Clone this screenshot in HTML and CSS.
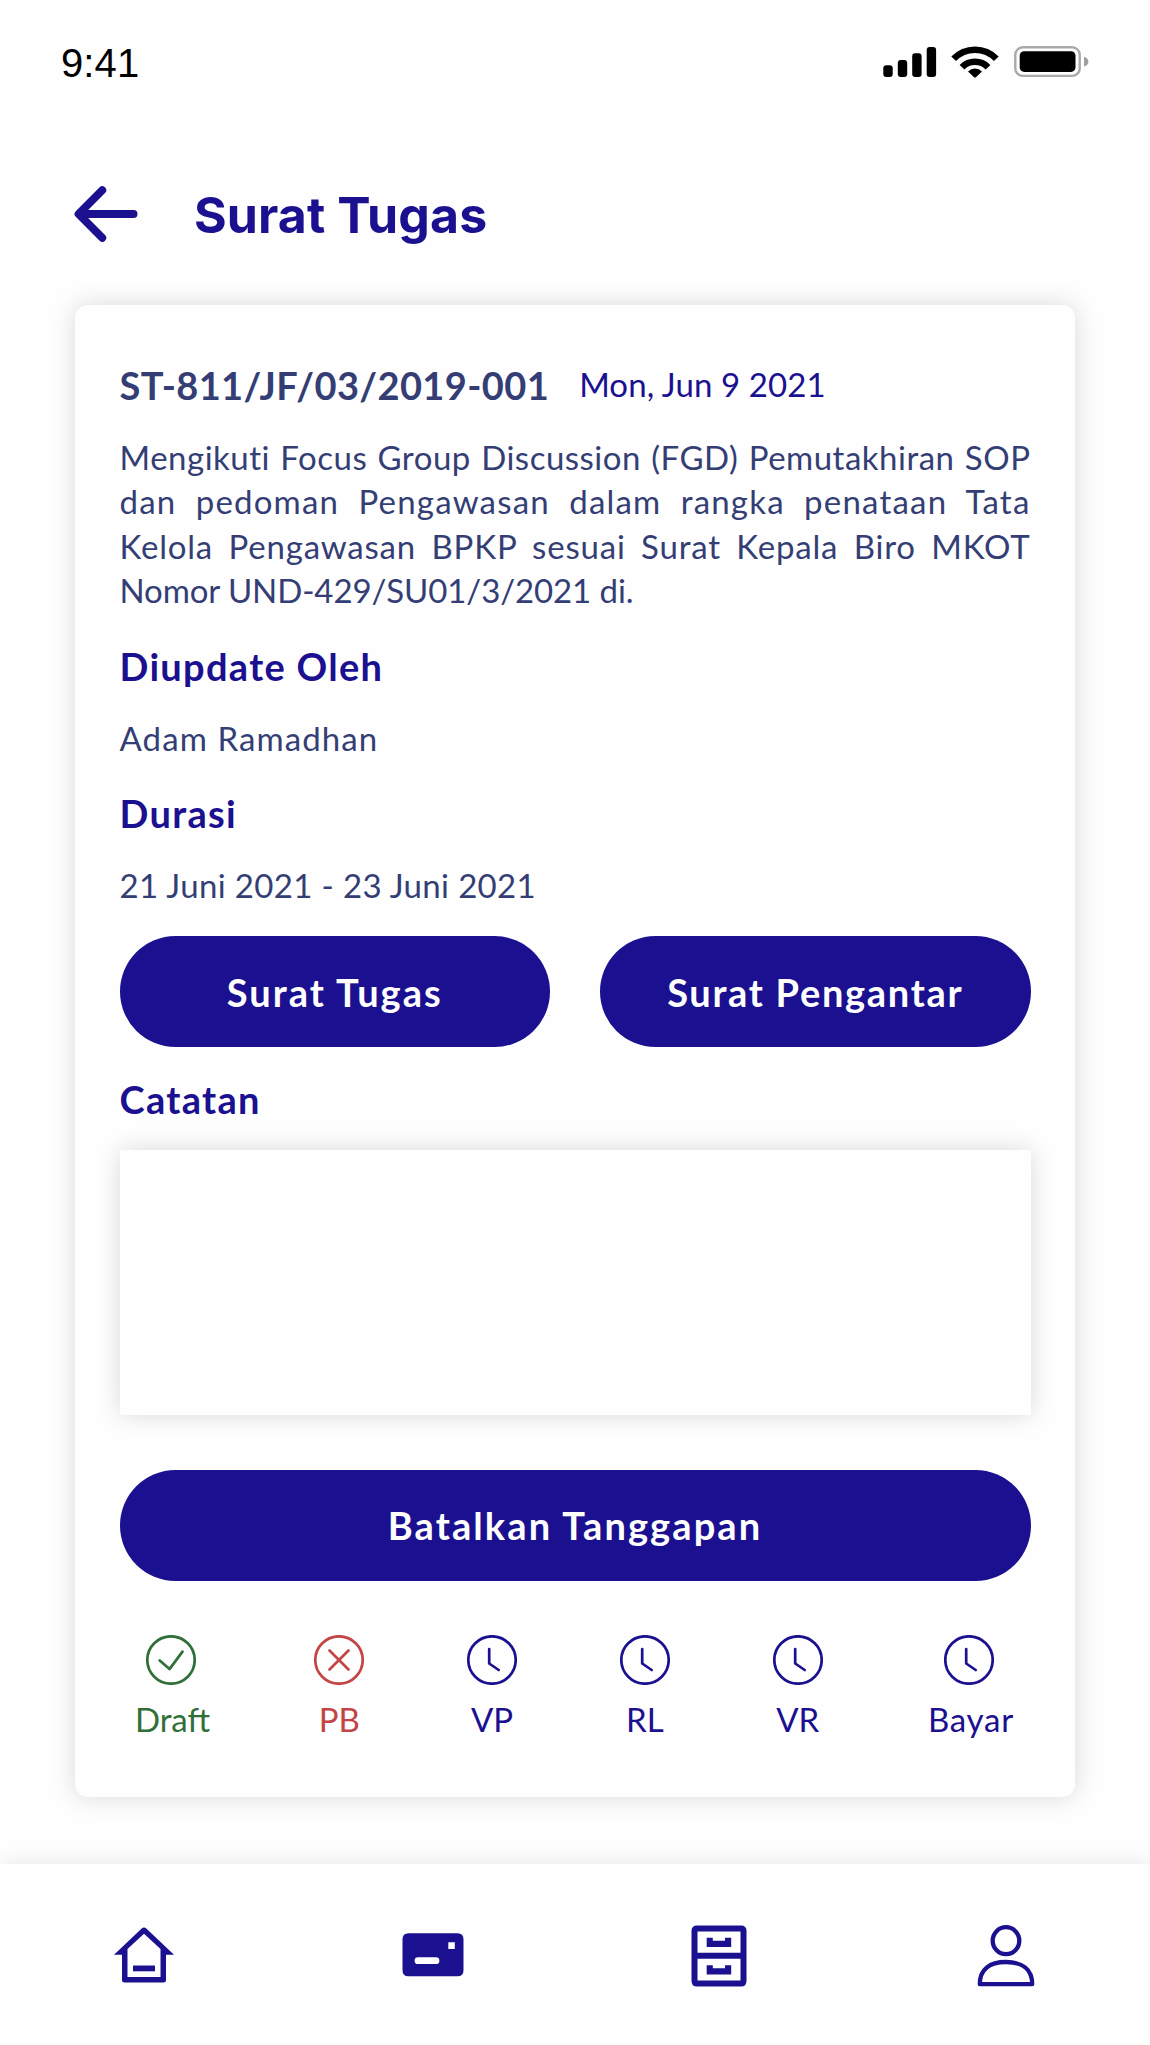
FILE: index.html
```html
<!DOCTYPE html>
<html lang="id">
<head>
<meta charset="utf-8">
<title>Surat Tugas</title>
<link rel="stylesheet" href="styles.css">
</head>
<body>
<div class="screen">
  <div class="status-bar">
    <span class="time">9:41</span>
    <svg class="status-icons" viewBox="0 0 206 32" width="206" height="32">
      <rect x="0.3" y="19.3" width="9.4" height="11.7" rx="3"/>
      <rect x="14.8" y="14" width="9.4" height="17" rx="3"/>
      <rect x="29.2" y="7.3" width="9.4" height="23.7" rx="3"/>
      <rect x="43.7" y="1" width="9.4" height="30" rx="3"/>
      <g fill="none" stroke="#000" stroke-width="6.6">
        <path d="M70.7 12.8a29.5 29.5 0 0 1 42.6 0"/>
        <path d="M79 21.2a18.3 18.3 0 0 1 26 0"/>
      </g>
      <path d="M85 25.4a10 10 0 0 1 14 0l-5.8 5.6q-1.2 1.2-2.4 0z"/>
      <rect x="132.3" y="1.3" width="64.4" height="28.6" rx="7.5" fill="none" stroke="#a9a9a9" stroke-width="2.4"/>
      <rect x="136.7" y="5.3" width="55.8" height="20.6" rx="4.5"/>
      <path d="M201 10.8q4.4 1.4 4.4 4.9t-4.4 4.900z" fill="#a0a0a0"/>
    </svg>
  </div>

  <header class="header">
    <svg class="back" viewBox="0 0 64 56" width="64" height="56"><path d="M28.2 4.2 4.600 28l23.600 23.800M5 28h54.500" fill="none" stroke="currentColor" stroke-width="8" stroke-linecap="round" stroke-linejoin="round"/></svg>
    <h1 class="title">Surat Tugas</h1>
  </header>

  <main class="card">
    <div class="letter-head">
      <h2 class="letter-no">ST-811/JF/03/2019-001</h2>
      <span class="letter-date">Mon, Jun 9 2021</span>
    </div>
    <p class="summary">
      <span class="line">Mengikuti Focus Group Discussion (FGD) Pemutakhiran SOP</span>
      <span class="line wide">dan pedoman Pengawasan dalam rangka penataan Tata</span>
      <span class="line medium">Kelola Pengawasan BPKP sesuai Surat Kepala Biro MKOT</span>
      <span class="line last">Nomor UND-429/SU01/3/2021 di.</span>
    </p>
    <h3 class="label">Diupdate Oleh</h3>
    <p class="value">Adam Ramadhan</p>
    <h3 class="label">Durasi</h3>
    <p class="value duration">21 Juni 2021 - 23 Juni 2021</p>
    <div class="actions">
      <button class="btn">Surat Tugas</button>
      <button class="btn cover">Surat Pengantar</button>
    </div>
    <h3 class="label note-label">Catatan</h3>
    <div class="note"></div>
    <button class="btn cancel">Batalkan Tanggapan</button>
    <div class="steps">
      <div class="step done">
        <svg class="step-icon" viewBox="0 0 50 50"><circle cx="25" cy="25" r="23.7"/><path d="M13.7 25.5l9.8 8.6 13-17.5"/></svg>
        <span class="step-name">Draft</span>
      </div>
      <div class="step rejected">
        <svg class="step-icon" viewBox="0 0 50 50"><circle cx="25" cy="25" r="23.7"/><path d="M15.5 15.5l19 19M34.5 15.5l-19 19"/></svg>
        <span class="step-name">PB</span>
      </div>
      <div class="step">
        <svg class="step-icon" viewBox="0 0 50 50"><circle cx="25" cy="25" r="23.7"/><path d="M22.2 14.2v14.3l9.5 6.5"/></svg>
        <span class="step-name">VP</span>
      </div>
      <div class="step">
        <svg class="step-icon" viewBox="0 0 50 50"><circle cx="25" cy="25" r="23.7"/><path d="M22.2 14.2v14.3l9.5 6.5"/></svg>
        <span class="step-name">RL</span>
      </div>
      <div class="step">
        <svg class="step-icon" viewBox="0 0 50 50"><circle cx="25" cy="25" r="23.7"/><path d="M22.2 14.2v14.3l9.5 6.5"/></svg>
        <span class="step-name">VR</span>
      </div>
      <div class="step">
        <svg class="step-icon" viewBox="0 0 50 50"><circle cx="25" cy="25" r="23.7"/><path d="M22.2 14.2v14.3l9.5 6.5"/></svg>
        <span class="step-name pay">Bayar</span>
      </div>
    </div>
  </main>

  <nav class="tabs">
    <svg viewBox="0 0 62 62" width="62" height="62"><path fill="currentColor" fill-rule="evenodd" d="M28.7 3.5q2.3-1.8 4.6 0L61 29.7h-8V55q0 2.5-2.500 2.500h-39Q9 57.500 9 55V29.700H1zM31 8.800 14.500 24v28h33V24z"/><path fill="currentColor" d="M20 40.500h22v5.800H20z"/></svg>
    <svg viewBox="0 0 62 62" width="62" height="62"><path fill="currentColor" fill-rule="evenodd" d="M6.500 8.200h49q6 0 6 6v31q0 6-6 6h-49q-6 0-6-6v-31q0-6 6-6zM46.300 17.200v6.800h6.500v-6.800zM16 32.300a3.400 3.400 0 0 0 0 6.800h18a3.400 3.400 0 0 0 0-6.800z"/></svg>
    <svg class="archive" viewBox="0 0 56 62" width="56" height="62"><path fill="currentColor" fill-rule="evenodd" d="M6 .5h44q5.500 0 5.500 5.500v50q0 5.500-5.500 5.500H6Q.5 61.500.5 56V6Q.5.5 6 .5zM6.500 6.500v21.200h43V6.500zM6.500 33.700v21.700h43V33.700z"/><path fill="currentColor" d="M15.700 12.700h6.100v3H34v-3h6.200V22H15.700zM15.700 40.200h6.100v3H34v-3h6.200v9.300H15.700z"/></svg>
    <svg viewBox="0 0 58 62" width="58" height="62"><g fill="none" stroke="currentColor" stroke-width="4.300" stroke-linejoin="round"><ellipse cx="29" cy="15.700" rx="13.300" ry="13.500"/><path d="M2.800 59.200C2.800 44 13 37 29 37s26.200 7 26.200 22.200z"/></g></svg>
  </nav>
</div>
</body>
</html>
```
FILE: styles.css
```css
:root {
  --primary: #1b1090;
  --ink: #343e75;
}

* { box-sizing: border-box; }

body {
  margin: 0;
  background: #fefefe;
  color: var(--primary);
  font-family: Lato, "Noto Sans", sans-serif;
}

h1, h2, h3, p { margin: 0; }

.screen {
  display: flex;
  flex-direction: column;
  width: 1150px;
  height: 2045px;
  overflow: hidden;
}

.status-bar {
  display: flex;
  justify-content: space-between;
  align-items: flex-start;
  height: 186px;
  padding: 46px 61px 0 61px;
  color: #000;
}

.time {
  margin-top: -7px;
  font: 40px/48px "Liberation Sans", sans-serif;
  letter-spacing: 0.1px;
}

.header {
  display: flex;
  align-items: center;
  gap: 56px;
  height: 56px;
  padding-left: 74px;
}

.title {
  padding-top: 2px;
  font: 700 50px/60px Inter, sans-serif;
  letter-spacing: 0.1px;
}

.card {
  display: flex;
  flex-direction: column;
  width: 1000px;
  height: 1492px;
  margin: 63px 75px 0;
  padding: 58px 44.5px 0;
  border-radius: 13px;
  background: #fefefe;
  box-shadow: 0 0 26px rgba(0, 0, 0, 0.15);
}

.letter-head {
  display: flex;
  align-items: flex-start;
  gap: 30px;
  height: 71px;
  white-space: nowrap;
}

.letter-no {
  color: var(--ink);
  font-size: 38px;
  line-height: 44px;
  letter-spacing: 0.4px;
}

.letter-date {
  font-size: 33px;
  line-height: 43px;
  letter-spacing: 0.1px;
}

.summary, .value {
  padding-top: 1px;
  color: var(--ink);
  font-size: 33px;
  line-height: 44.4px;
}

.summary { height: 210px; }

.line {
  display: block;
  letter-spacing: 0.5px;
  text-align: justify;
  text-align-last: justify;
  white-space: nowrap;
}

.wide { letter-spacing: 1.2px; }

.medium { letter-spacing: 0.8px; }

.last {
  letter-spacing: -0.1px;
  text-align-last: left;
}

.label {
  height: 71px;
  font-size: 38px;
  line-height: 44px;
  letter-spacing: 1.3px;
}

.value {
  height: 76px;
  letter-spacing: 1.1px;
}

.duration {
  height: 74px;
  letter-spacing: 0.35px;
}

.actions {
  display: grid;
  grid-template-columns: 1fr 1fr;
  gap: 50px;
}

.btn {
  height: 111px;
  padding: 0;
  border: 0;
  border-radius: 56px;
  background: var(--primary);
  color: #fefefe;
  font: 700 38px/44px Lato, "Noto Sans", sans-serif;
  letter-spacing: 2px;
}

.cover { letter-spacing: 1.7px; }

.cancel { letter-spacing: 2.1px; }

.note-label {
  margin-top: 30px;
  height: 72.5px;
}

.note {
  height: 265px;
  margin-bottom: 55px;
  border-radius: 2px;
  background: #fefefe;
  box-shadow: 0 0 24px rgba(0, 0, 0, 0.15);
}

.steps {
  display: grid;
  grid-template-columns: 82px repeat(4, 50px) 88px;
  gap: 102.8px;
  padding: 54px 0 0 10px;
}

.step {
  display: flex;
  flex-direction: column;
  align-items: center;
  gap: 12px;
}

.step-icon {
  width: 50px;
  height: 50px;
  fill: none;
  stroke: currentColor;
  stroke-width: 2.7;
  stroke-linecap: round;
  stroke-linejoin: round;
}

.step-name {
  font-size: 33px;
  line-height: 44px;
}

.done { color: #307038; }

.done .step-name { padding-left: 4px; }

.pay {
  padding-left: 3px;
  letter-spacing: 0.8px;
}

.rejected { color: #c34545; }

.tabs {
  display: flex;
  gap: 227px;
  width: 1150px;
  height: 181px;
  margin-top: 67px;
  padding: 61px 0 0 113.4px;
  background: #fefefe;
  box-shadow: 0 0 20px rgba(0, 0, 0, 0.1);
}

.archive { margin-right: 3px; }
```
